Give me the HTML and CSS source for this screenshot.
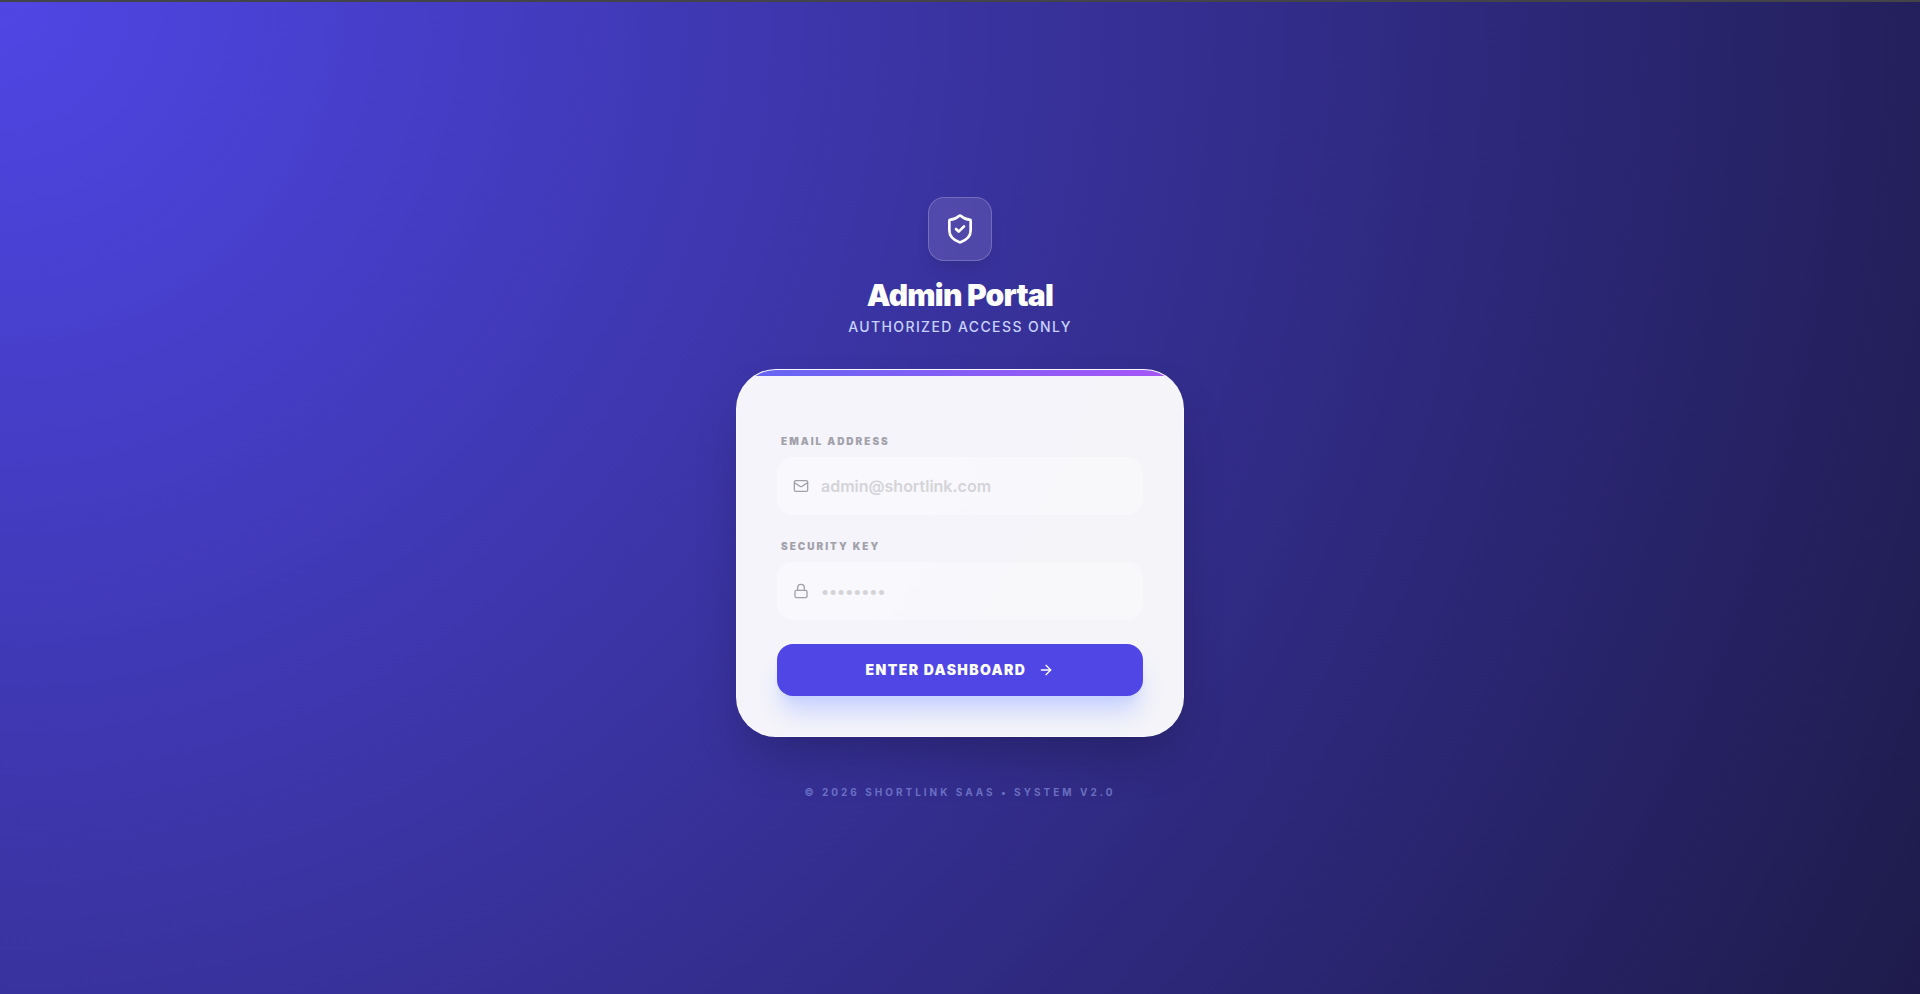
FILE: index.html
```html
<!DOCTYPE html>
<html lang="en">

<head>
    <meta charset="UTF-8">
    <meta name="viewport" content="width=device-width, initial-scale=1.0">
    <title>Admin Portal</title>
    <link rel="stylesheet" href="styles.css">
</head>

<body>
    <main class="login">
        <header class="login-header">
            <div class="logo">
                <svg class="icon" width="32" height="32" viewBox="0 0 24 24" aria-hidden="true">
                    <path d="M20 13c0 5-3.5 7.500-7.660 8.950a1 1 0 0 1-.67-.01C7.500 20.500 4 18 4 13V6a1 1 0 0 1 1-1c2 0 4.500-1.200 6.240-2.720a1.170 1.170 0 0 1 1.520 0C14.510 3.810 17 5 19 5a1 1 0 0 1 1 1z" />
                    <path d="m9 12 2 2 4-4" />
                </svg>
            </div>
            <h1 class="title">Admin Portal</h1>
            <p class="subtitle">Authorized Access Only</p>
        </header>

        <form class="card">
            <div class="field">
                <label class="label" for="email">Email Address</label>
                <div class="input-group">
                    <svg class="icon" width="16" height="16" viewBox="0 0 24 24" aria-hidden="true">
                        <rect x="2" y="4" width="20" height="16" rx="2" />
                        <path d="m22 7-8.970 5.700a1.940 1.940 0 0 1-2.060 0L2 7" />
                    </svg>
                    <input type="email" id="email" class="input" placeholder="admin@shortlink.com">
                </div>
            </div>

            <div class="field">
                <label class="label" for="password">Security Key</label>
                <div class="input-group">
                    <svg class="icon" width="16" height="16" viewBox="0 0 24 24" aria-hidden="true">
                        <rect x="3" y="11" width="18" height="11" rx="2" />
                        <path d="M7 11V7a5 5 0 0 1 10 0v4" />
                    </svg>
                    <input type="password" id="password" class="input" placeholder="••••••••">
                </div>
            </div>

            <button type="submit" class="button">
                Enter Dashboard
                <svg class="icon" width="16" height="16" viewBox="0 0 24 24" aria-hidden="true">
                    <path d="M5 12h14" />
                    <path d="m12 5 7 7-7 7" />
                </svg>
            </button>
        </form>

        <footer class="footer">© 2026 ShortLink SaaS • System v2.0</footer>
    </main>
</body>

</html>
```

FILE: styles.css
```css
:root {
    --primary: #4f46e5;
    --dark: #1e1b4b;
    --muted: #a1a1aa;
}

* {
    margin: 0;
    padding: 0;
    box-sizing: border-box;
}

body {
    min-height: 100vh;
    display: flex;
    align-items: center;
    justify-content: center;
    border-top: 2px solid #42444a;
    background: radial-gradient(circle at top left, var(--primary), var(--dark)) no-repeat;
    font-family: Inter, sans-serif;
}

.login {
    width: 100%;
    max-width: 448px;
}

.login-header {
    display: flex;
    flex-direction: column;
    align-items: center;
    margin-bottom: 32px;
    text-align: center;
}

.icon {
    flex-shrink: 0;
    fill: none;
    stroke: currentColor;
    stroke-width: 2;
    stroke-linecap: round;
    stroke-linejoin: round;
}

.logo {
    display: flex;
    align-items: center;
    justify-content: center;
    width: 64px;
    height: 64px;
    margin-bottom: 16px;
    border: 1px solid rgba(255, 255, 255, 0.2);
    border-radius: 16px;
    background: rgba(255, 240, 255, 0.12);
    color: white;
    box-shadow: 0 10px 15px -3px rgba(0, 0, 0, 0.1);
}

.title {
    margin-bottom: 4px;
    color: white;
    font-size: 30px;
    font-weight: 900;
    line-height: 36px;
    letter-spacing: -0.025em;
}

.subtitle {
    color: #c7d2fe;
    font-size: 14px;
    font-weight: 500;
    line-height: 20px;
    letter-spacing: 0.1em;
    text-transform: uppercase;
}

.card {
    position: relative;
    display: flex;
    flex-direction: column;
    gap: 24px;
    padding: 64px 40px 40px;
    border: 1px solid rgba(255, 255, 255, 0.5);
    border-radius: 40px;
    overflow: hidden;
    background: rgba(255, 255, 255, 0.95);
    box-shadow: 0 25px 50px -12px rgba(0, 0, 0, 0.25);
}

/* Accent bar along the top edge */
.card::before {
    content: "";
    position: absolute;
    top: 0;
    left: 0;
    width: 100%;
    height: 6px;
    background: linear-gradient(to right, #6366f1, #a855f7);
}

.field {
    display: flex;
    flex-direction: column;
    gap: 8px;
}

.label {
    margin-left: 4px;
    color: var(--muted);
    font-size: 10px;
    font-weight: 900;
    line-height: 15px;
    letter-spacing: 0.2em;
    text-transform: uppercase;
}

.input-group {
    display: flex;
    align-items: center;
    gap: 12px;
    padding-left: 16px;
    border-radius: 16px;
    background: rgba(255, 255, 255, 0.4);
    color: var(--muted);
}

.input-group:focus-within {
    background: white;
}

.input {
    flex: 1;
    min-width: 0;
    height: 58px;
    border: none;
    outline: none;
    background: transparent;
    color: #111827;
    font-family: inherit;
    font-size: 16px;
    font-weight: 600;
}

.input::placeholder {
    color: #d4d4d8;
}

.button {
    display: flex;
    align-items: center;
    justify-content: center;
    gap: 12px;
    height: 52px;
    border: none;
    border-radius: 16px;
    background: var(--primary);
    color: white;
    font-family: inherit;
    font-size: 14px;
    font-weight: 900;
    letter-spacing: 0.1em;
    text-transform: uppercase;
    cursor: pointer;
    box-shadow: 0 20px 25px -5px #c7d2fe, 0 8px 10px -6px #c7d2fe;
}

.button:hover {
    background: #4338ca;
}

.footer {
    margin-top: 48px;
    color: rgba(165, 180, 252, 0.5);
    font-size: 10px;
    font-weight: 700;
    line-height: 15px;
    letter-spacing: 0.3em;
    text-align: center;
    text-transform: uppercase;
}
```
